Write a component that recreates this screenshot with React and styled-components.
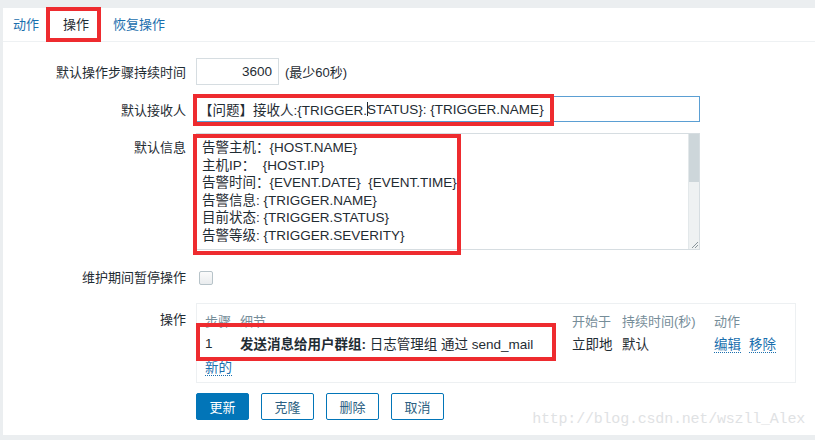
import styled, { createGlobalStyle } from 'styled-components';

const GlobalStyle = createGlobalStyle`
	body {
		margin: 0;
		background: #ebeef0;
		font-family: 'Liberation Sans', 'Noto Sans CJK SC', sans-serif;
		font-size: 13px;
		color: #1f2c33;
	}
`;

const RED = '#ee2b2f';

const Page = styled.div`
	padding: 8px 0 0 3px;
	height: 440px;
	box-sizing: border-box;
`;

const Panel = styled.div`
	position: relative;
	background: #fff;
	height: 427px;
`;

const Tabs = styled.div`
	display: flex;
	height: 33px;
	border-bottom: 1px solid #eef1f3;
`;

const Tab = styled.div`
	position: relative;
	padding: 0 12px;
	line-height: 33px;
	color: ${({ $active }) => ($active ? '#1f2c33' : '#1b6fae')};
	&:first-child {
		padding-left: 10px;
	}
`;

const Mark = styled.span`
	position: absolute;
	left: ${({ $l }) => $l}px;
	top: ${({ $t }) => $t}px;
	width: ${({ $w }) => $w}px;
	height: ${({ $h }) => $h}px;
	border: 4px solid ${RED};
	box-sizing: border-box;
	pointer-events: none;
`;

const Form = styled.div`
	display: flex;
	flex-direction: column;
	padding-top: 16px;
`;

const Row = styled.div`
	display: grid;
	grid-template-columns: 183px 1fr;
	column-gap: 10px;
	align-items: ${({ $top }) => ($top ? 'start' : 'center')};
	margin-top: ${({ $mt }) => $mt || 0}px;
	line-height: ${({ $lh }) => ($lh ? `${$lh}px` : 'normal')};
`;

const Label = styled.div`
	text-align: right;
	padding-top: ${({ $pt }) => $pt || 0}px;
	white-space: nowrap;
`;

const Inline = styled.div`
	display: flex;
	align-items: center;
	gap: 6px;
`;

const Input = styled.div`
	position: relative;
	box-sizing: border-box;
	width: ${({ $w }) => $w}px;
	height: ${({ $h }) => $h}px;
	border: 1px solid ${({ $focus }) => ($focus ? '#5b9fd3' : '#d6dde1')};
	padding: 0 6px 0 2px;
	display: flex;
	align-items: center;
	justify-content: ${({ $right }) => ($right ? 'flex-end' : 'flex-start')};
	font-size: 13.5px;
	white-space: pre;
`;

const Caret = styled.span`
	display: inline-block;
	width: 1px;
	height: 14px;
	background: #1f2c33;
	vertical-align: -2px;
	margin-right: -1px;
`;

const TextArea = styled.div`
	position: relative;
	box-sizing: border-box;
	width: 504px;
	height: 117px;
	border: 1px solid #d6dde1;
	display: flex;
`;

const TextBody = styled.div`
	flex: 1;
	padding: 5px 0 0 5px;
	font-size: 13.5px;
	line-height: 17.6px;
	white-space: pre;
`;

const ScrollTrack = styled.div`
	position: relative;
	width: 10px;
	background: #eef1f2;
	border-left: 1px solid #e3e8ea;
`;

const ScrollThumb = styled.div`
	height: 48px;
	background: #cdd6da;
`;

const Grip = styled.svg`
	position: absolute;
	right: 0;
	bottom: 0;
`;

const Checkbox = styled.span`
	display: block;
	width: 12px;
	height: 12px;
	margin-left: 3px;
	border: 1px solid #b7c3c9;
	border-radius: 2px;
	background: linear-gradient(#fbfbfb, #e9ecee);
`;

const OpsBox = styled.div`
	position: relative;
	box-sizing: border-box;
	width: 600px;
	height: 80px;
	border: 1px solid #edf0f2;
	padding: 5px 0 0 8px;
	display: grid;
	grid-template-columns: 35px 332px 50px 92px auto;
	grid-template-rows: 22px 24px 22px;
	align-items: center;
	line-height: normal;
`;

const Head = styled.div`
	color: #768d99;
	white-space: nowrap;
`;

const Cell = styled.div`
	white-space: nowrap;
	font-size: 13.5px;
	b {
		font-weight: bold;
	}
`;

const Link = styled.span`
	color: #1b6fae;
	border-bottom: 1px dotted #1b6fae;
	margin-right: 8px;
`;

const Buttons = styled.div`
	display: flex;
	gap: 12px;
`;

const Button = styled.button`
	box-sizing: border-box;
	width: 53px;
	height: 27px;
	border-radius: 2px;
	font: inherit;
	font-size: 13px;
	border: 1px solid #0275b8;
	background: ${({ $primary }) => ($primary ? '#0275b8' : '#fff')};
	color: ${({ $primary }) => ($primary ? '#fff' : '#2c5f82')};
	padding: 0;
`;

const Watermark = styled.div`
	position: absolute;
	right: 10px;
	bottom: 7px;
	font-family: 'Liberation Mono', monospace;
	font-size: 15px;
	color: #dfe2e4;
	letter-spacing: -0.2px;
`;

const messageLines = [
	'告警主机：{HOST.NAME}',
	'主机IP：  {HOST.IP}',
	'告警时间：{EVENT.DATE}  {EVENT.TIME}',
	'告警信息: {TRIGGER.NAME}',
	'目前状态: {TRIGGER.STATUS}',
	'告警等级: {TRIGGER.SEVERITY}',
];

export default function App() {
	return (
		<>
			<GlobalStyle />
			<Page>
				<Panel>
					<Tabs>
						<Tab>动作</Tab>
						<Tab $active>
							操作
							<Mark $l={-5} $t={-1} $w={55} $h={35} />
						</Tab>
						<Tab>恢复操作</Tab>
					</Tabs>

					<Form>
						<Row>
							<Label>默认操作步骤持续时间</Label>
							<Inline>
								<Input $w={83} $h={27} $right>
									3600
								</Input>
								<span>(最少60秒)</span>
							</Inline>
						</Row>

						<Row $mt={11}>
							<Label>默认接收人</Label>
							<Input $w={504} $h={26} $focus>
								【问题】接收人:{'{'}TRIGGER.<Caret />STATUS{'}'}: {'{'}TRIGGER.NAME{'}'}
								<Mark $l={-4} $t={-3} $w={361} $h={32} />
							</Input>
						</Row>

						<Row $mt={11} $top>
							<Label $pt={4}>默认信息</Label>
							<TextArea>
								<TextBody>{messageLines.join('\n')}</TextBody>
								<ScrollTrack>
									<ScrollThumb />
									<Grip width="9" height="9" viewBox="0 0 9 9">
										<path d="M8 2 L2 8 M8 5 L5 8" stroke="#8a969c" strokeWidth="1" />
									</Grip>
								</ScrollTrack>
								<Mark $l={-4} $t={0} $w={268} $h={121} />
							</TextArea>
						</Row>

						<Row $mt={21} $lh={14}>
							<Label>维护期间暂停操作</Label>
							<div>
								<Checkbox />
							</div>
						</Row>

						<Row $mt={18} $top>
							<Label $pt={6}>操作</Label>
							<OpsBox>
								<Head>步骤</Head>
								<Head>细节</Head>
								<Head>开始于</Head>
								<Head>持续时间(秒)</Head>
								<Head>动作</Head>
								<Cell>1</Cell>
								<Cell>
									<b>发送消息给用户群组:</b> 日志管理组 通过 send_mail
								</Cell>
								<Cell>立即地</Cell>
								<Cell>默认</Cell>
								<Cell>
									<Link>编辑</Link>
									<Link>移除</Link>
								</Cell>
								<Cell>
									<Link>新的</Link>
								</Cell>
								<Mark $l={-1} $t={19} $w={360} $h={38} />
							</OpsBox>
						</Row>

						<Row $mt={10}>
							<div />
							<Buttons>
								<Button $primary>更新</Button>
								<Button>克隆</Button>
								<Button>删除</Button>
								<Button>取消</Button>
							</Buttons>
						</Row>
					</Form>

					<Watermark>http://blog.csdn.net/wszll_Alex</Watermark>
				</Panel>
			</Page>
		</>
	);
}
